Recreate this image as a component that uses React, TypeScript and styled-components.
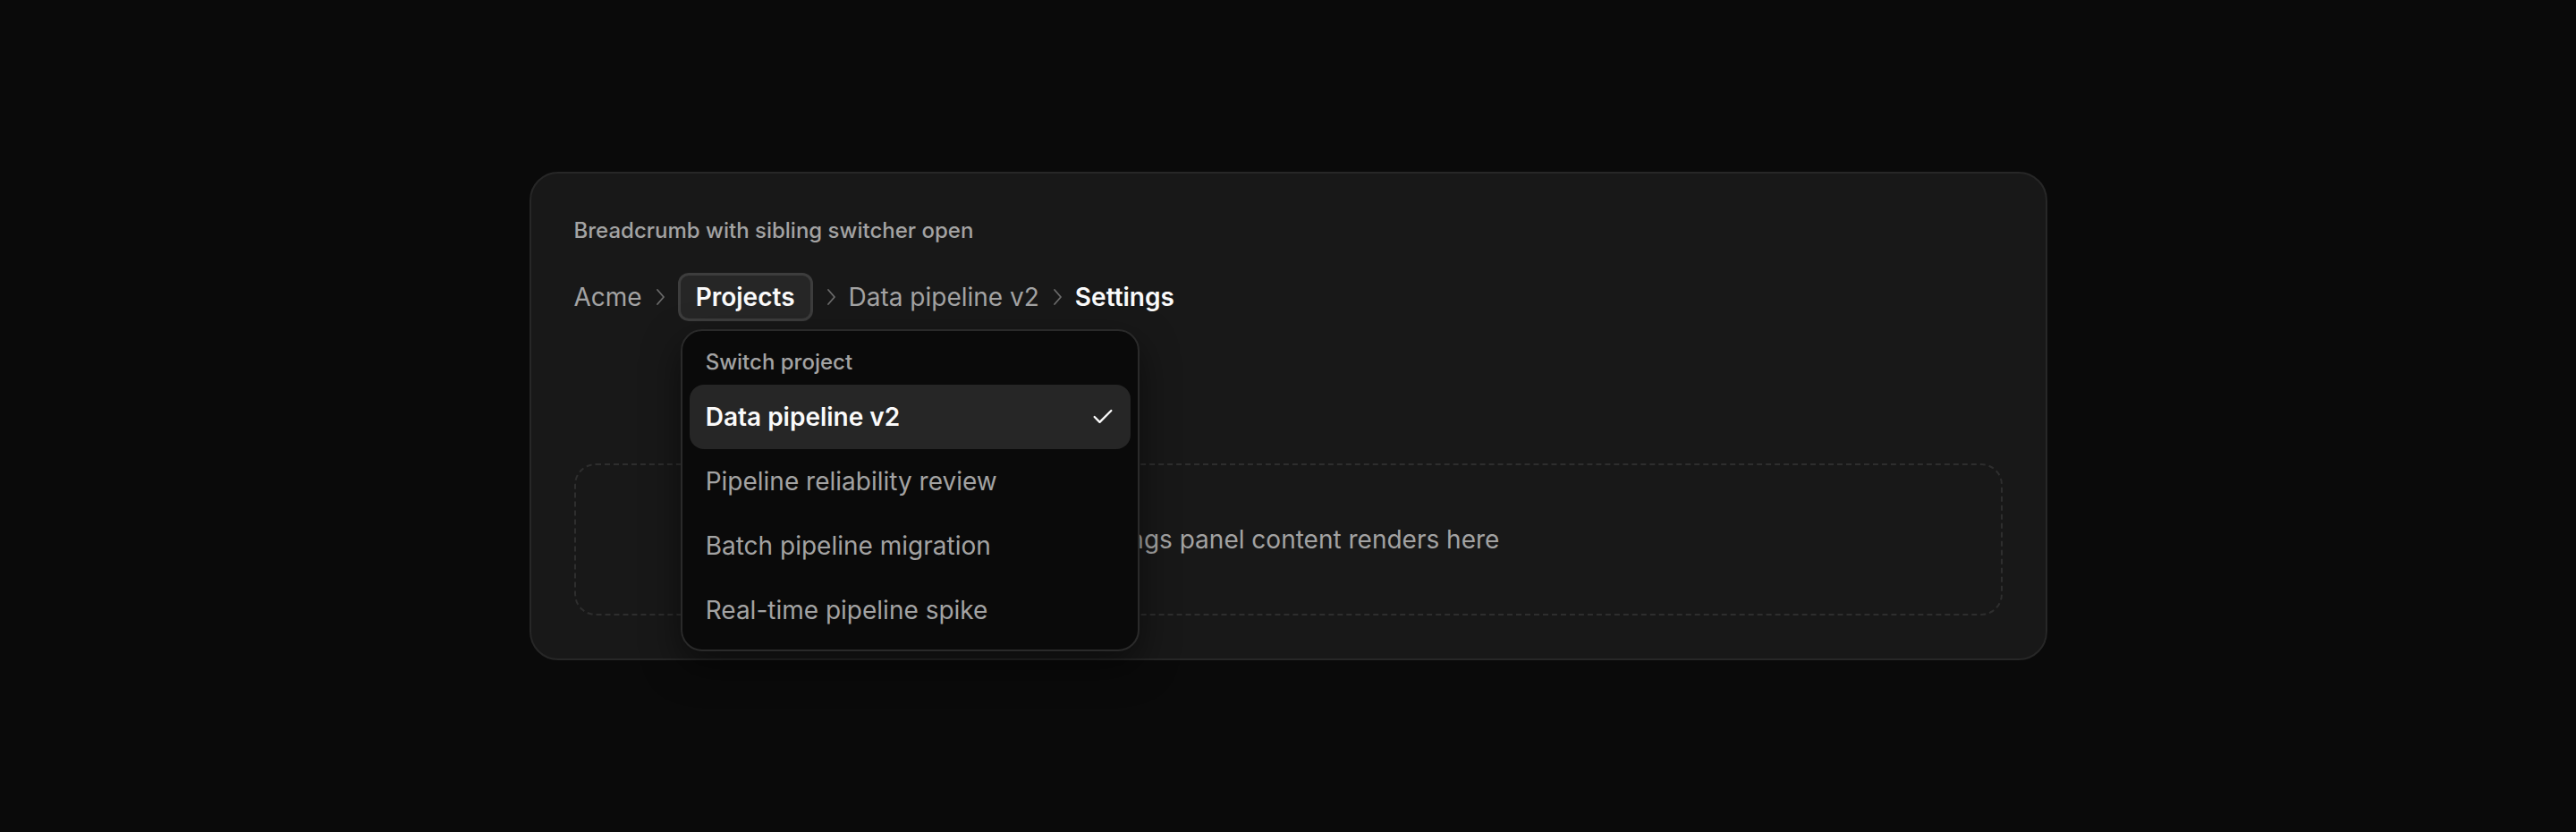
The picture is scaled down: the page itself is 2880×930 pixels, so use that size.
import { createGlobalStyle, styled } from "styled-components";

const GlobalStyle = createGlobalStyle`
  html, body {
    margin: 0;
    background: #0a0a0a;
    font-family: Inter, "Noto Sans", sans-serif;
  }
`;

const siblings = [
  "Data pipeline v2",
  "Pipeline reliability review",
  "Batch pipeline migration",
  "Real-time pipeline spike",
];

const Chevron = () => (
  <ChevronIcon viewBox="0 0 20 20" width="20" height="20" fill="none">
    <path d="M7 2 L14 10 L7 18" stroke="currentColor" strokeWidth="1.8" strokeLinecap="round" strokeLinejoin="round" />
  </ChevronIcon>
);

const CheckIcon = () => (
  <svg viewBox="0 0 24 24" width="28" height="28" fill="none">
    <path d="M20 6 9 17l-5-5" stroke="currentColor" strokeWidth="2" strokeLinecap="round" strokeLinejoin="round" />
  </svg>
);

const App = () => {
  return (
    <>
      <GlobalStyle />
      <Page>
        <Card>
          <Title>Breadcrumb with sibling switcher open</Title>
          <Crumbs>
            <Crumb>Acme</Crumb>
            <Chevron />
            <Switcher>
              <SwitcherButton>Projects</SwitcherButton>
              <Menu>
                <MenuLabel>Switch project</MenuLabel>
                {siblings.map((name, i) => (
                  <MenuItem key={name} $active={i === 0}>
                    {name}
                    {i === 0 && <CheckIcon />}
                  </MenuItem>
                ))}
              </Menu>
            </Switcher>
            <Chevron />
            <Crumb>Data pipeline v2</Crumb>
            <Chevron />
            <Crumb $current>Settings</Crumb>
          </Crumbs>
          <Panel>Settings panel content renders here</Panel>
        </Card>
      </Page>
    </>
  );
};
export default App;

const Page = styled.div`
  height: 100vh;
  overflow: hidden;
  display: flex;
  align-items: center;
  justify-content: center;
`;

const Card = styled.div`
  box-sizing: border-box;
  width: 1697px;
  padding: 48px;
  display: flex;
  flex-direction: column;
  background: #181818;
  border: 2px solid #272727;
  border-radius: 32px;
`;

const Title = styled.div`
  font-size: 24px;
  line-height: 32px;
  font-weight: 500;
  color: #a3a3a3;
`;

const Crumbs = styled.div`
  margin-top: 31px;
  height: 54px;
  display: flex;
  align-items: center;
  gap: 10px;
`;

const Crumb = styled.span<{ $current?: boolean }>`
  font-size: 28px;
  line-height: 36px;
  font-weight: ${(p) => (p.$current ? 600 : 400)};
  color: ${(p) => (p.$current ? "#fafafa" : "#a3a3a3")};
`;

const ChevronIcon = styled.svg`
  color: #6b6b6b;
  flex-shrink: 0;
`;

const Switcher = styled.div`
  position: relative;
`;

const SwitcherButton = styled.button`
  box-sizing: border-box;
  height: 54px;
  padding: 0 17px;
  font-family: inherit;
  font-size: 28px;
  font-weight: 600;
  color: #fafafa;
  background: #262626;
  border: 3px solid #3d3d3d;
  border-radius: 12px;
`;

const Menu = styled.div`
  position: absolute;
  top: calc(100% + 9px);
  left: 3px;
  z-index: 10;
  box-sizing: border-box;
  width: 513px;
  padding: 8px;
  background: #0a0a0a;
  border: 2px solid #2a2a2a;
  border-radius: 24px;
  box-shadow: 0 16px 40px rgba(0, 0, 0, 0.5);
`;

const MenuLabel = styled.div`
  height: 52px;
  padding: 0 18px;
  display: flex;
  align-items: center;
  font-size: 24px;
  font-weight: 500;
  color: #a3a3a3;
`;

const MenuItem = styled.div<{ $active?: boolean }>`
  height: 72px;
  padding: 0 17px 0 18px;
  display: flex;
  align-items: center;
  justify-content: space-between;
  border-radius: 16px;
  font-size: 28px;
  font-weight: ${(p) => (p.$active ? 600 : 400)};
  color: ${(p) => (p.$active ? "#fafafa" : "#a3a3a3")};
  background: ${(p) => (p.$active ? "#262626" : "transparent")};
`;

const Panel = styled.div`
  margin-top: 159px;
  height: 170px;
  box-sizing: border-box;
  display: flex;
  align-items: center;
  justify-content: center;
  border: 2px dashed #2e2e2e;
  border-radius: 24px;
  font-size: 28px;
  color: #a3a3a3;
`;
